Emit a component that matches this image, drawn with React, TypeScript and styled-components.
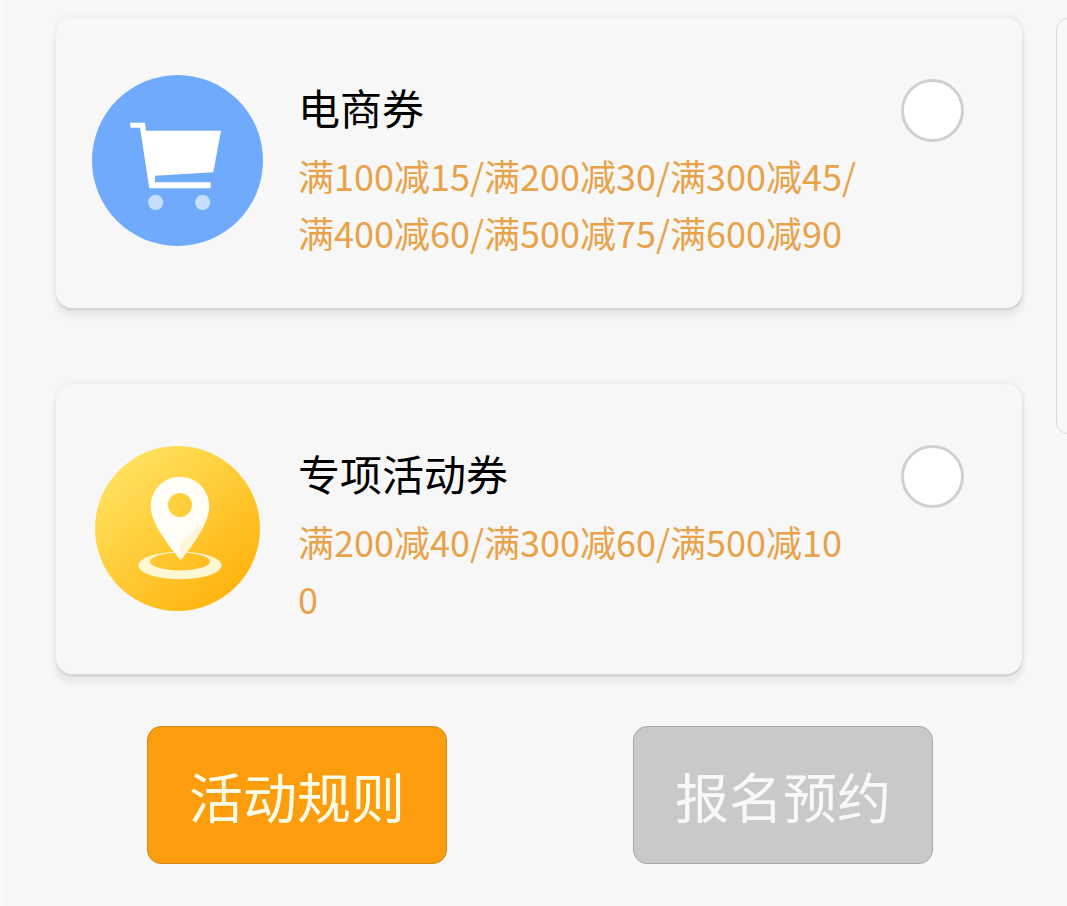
import React from 'react';
import styled, { createGlobalStyle } from 'styled-components';

const FONT = '"Noto Sans CJK SC", "Noto Sans", sans-serif';

const GlobalStyle = createGlobalStyle`
  html, body {
    margin: 0;
    padding: 0;
    background: #f7f7f7;
  }
`;

const Page = styled.div`
  display: flex;
  align-items: flex-start;
  gap: 34px;
  width: 1067px;
  height: 906px;
  padding: 18px 0 0 53px;
  box-sizing: border-box;
  border-left: 3px solid #fafafa;
  overflow: hidden;
  font-family: ${FONT};
`;

const Column = styled.div`
  display: flex;
  flex: 0 0 966px;
  flex-direction: column;
  gap: 76px;
`;

const SidePanel = styled.div`
  flex: 0 0 60px;
  height: 416px;
  box-sizing: border-box;
  border: 1px solid #dcdcdc;
  border-radius: 12px;
  background: #f8f8f8;
`;

const Card = styled.div`
  display: grid;
  grid-template-columns: 244px 558px 1fr;
  height: 290px;
  border-radius: 16px;
  background: #f7f7f7;
  box-shadow: 0 -3px 3px 2px rgba(0, 0, 0, 0.02), 2px 0 2px 1px rgba(0, 0, 0, 0.025), 0 3px 1px rgba(0, 0, 0, 0.07), 0 8px 5px 2px rgba(0, 0, 0, 0.05);
`;

const IconSlot = styled.div<{ $nudge: number }>`
  display: flex;
  align-items: center;
  justify-content: center;
  padding: 0 2px ${p => p.$nudge}px 0;
`;

const Badge = styled.svg<{ $size: number }>`
  display: block;
  width: ${p => p.$size}px;
  height: ${p => p.$size}px;
`;

const Info = styled.div`
  padding-top: 65px;
`;

const Title = styled.div`
  margin-left: -2px;
  color: #000;
  font-size: 42px;
  line-height: 48px;
`;

const Terms = styled.div`
  margin: 16px 0 0 -2px;
  color: #e8a249;
  font-size: 36px;
  line-height: 57px;
  word-break: break-all;
`;

const RadioSlot = styled.div`
  display: flex;
  justify-content: flex-end;
  padding: 61px 58px 0 0;
`;

const Radio = styled.div`
  width: 63px;
  height: 63px;
  box-sizing: border-box;
  border: 3px solid #d0d0d0;
  border-radius: 50%;
  background: #fff;
`;

const Actions = styled.div`
  display: flex;
  gap: 186px;
  margin-top: -24px;
  padding-left: 91px;
`;

const ActionButton = styled.button<{ $disabled?: boolean }>`
  width: 300px;
  height: 138px;
  padding: 0;
  box-sizing: border-box;
  border: 1px solid ${p => (p.$disabled ? '#a8a8a8' : '#cf8a22')};
  border-radius: 14px;
  background: ${p => (p.$disabled ? '#c9c9c9' : '#fb9d0c')};
  color: ${p => (p.$disabled ? '#f8f8f8' : '#fffbe9')};
  font-family: ${FONT};
  font-size: 54px;
  font-weight: 400;
`;

const CartIcon = () => (
  <Badge $size={171} viewBox="0 0 171 171">
    <circle cx="85.5" cy="85.5" r="85.5" fill="#70aafc" />
    <path
      fill="#fff"
      d="M38 47.7H53L54 55.7H129L121.3 97.3L63 100.7V107.3H118.7V113.3H57.3L48 52.7H38.7Z"
    />
    <circle cx="63.7" cy="127.3" r="7.6" fill="#c6defc" />
    <circle cx="110.7" cy="127.3" r="7.6" fill="#c6defc" />
  </Badge>
);

const PinIcon = () => (
  <Badge $size={165} viewBox="0 0 165 165">
    <defs>
      <linearGradient id="pinBg" x1="0.15" y1="0.1" x2="0.85" y2="0.9">
        <stop offset="0" stopColor="#ffe25f" />
        <stop offset="1" stopColor="#ffb30c" />
      </linearGradient>
    </defs>
    <circle cx="82.5" cy="82.5" r="82.5" fill="url(#pinBg)" />
    <path
      fill="#fff6d2"
      fillRule="evenodd"
      d="M43.3 119.5A41.7 13.7 0 1 0 126.7 119.5A41.7 13.7 0 1 0 43.3 119.5ZM55 115.5A30 9 0 1 1 115 115.5A30 9 0 1 1 55 115.5Z"
    />
    <path
      fill="#fffdf5"
      fillRule="evenodd"
      d="M85 30.7C101.2 30.7 114.3 43.8 114.3 60C114.3 77 98 99 85.7 114C73 99 55.7 77 55.7 60C55.7 43.8 68.8 30.7 85 30.7ZM85 47A12 12 0 1 0 85 71A12 12 0 1 0 85 47Z"
    />
    <path fill="#fff6da" d="M85.7 114C96 101 107 85 111 74L85.7 96Z" />
  </Badge>
);

const coupons = [
  {
    title: '电商券',
    terms: '满100减15/满200减30/满300减45/满400减60/满500减75/满600减90',
    icon: <CartIcon />,
    nudge: 6,
  },
  {
    title: '专项活动券',
    terms: '满200减40/满300减60/满500减100',
    icon: <PinIcon />,
    nudge: 2,
  },
];

const App = () => (
  <Page>
    <GlobalStyle />
    <Column>
      {coupons.map(coupon => (
        <Card key={coupon.title}>
          <IconSlot $nudge={coupon.nudge}>{coupon.icon}</IconSlot>
          <Info>
            <Title>{coupon.title}</Title>
            <Terms>{coupon.terms}</Terms>
          </Info>
          <RadioSlot>
            <Radio />
          </RadioSlot>
        </Card>
      ))}
      <Actions>
        <ActionButton>活动规则</ActionButton>
        <ActionButton $disabled>报名预约</ActionButton>
      </Actions>
    </Column>
    <SidePanel />
  </Page>
);

export default App;
